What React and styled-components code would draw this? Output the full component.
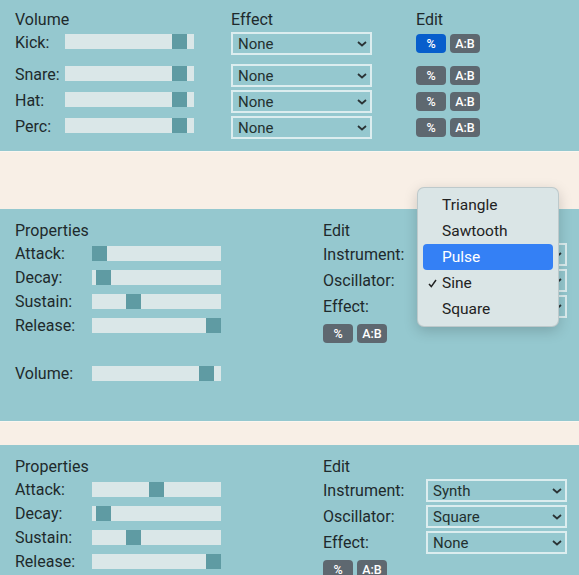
import React from "react";
import styled, { createGlobalStyle } from "styled-components";

const Global = createGlobalStyle`
  html, body { margin: 0; padding: 0; }
  body {
    background: #95c8cf;
    font-family: Roboto, "Liberation Sans", sans-serif;
    font-size: 16px;
    color: #1e2a2c;
    overflow: hidden;
  }
`;

const Page = styled.div`
  position: relative;
  width: 579px;
  height: 575px;
  overflow: hidden;
  display: flex;
  flex-direction: column;
`;

const Band = styled.div`
  background: #f8efe6;
  height: ${(p) => p.$h}px;
  flex: none;
  border-top: 1px solid #fbf6f0;
  box-sizing: border-box;
`;

const MixerPanel = styled.section`
  background: #95c8cf;
  height: 151px;
  flex: none;
  box-sizing: border-box;
  padding: 8px 0 0 15px;
  display: flex;
  flex-direction: column;
`;

const MixerHead = styled.div`
  display: grid;
  grid-template-columns: 216px 185px auto;
  align-items: center;
  height: 22px;
`;

const MixerRow = styled.div`
  display: grid;
  grid-template-columns: 216px 185px auto;
  align-items: center;
  height: 26px;
  margin-bottom: ${(p) => p.$gap || 0}px;
`;

const Channel = styled.div`
  display: flex;
  align-items: center;
  margin-bottom: 5px;
`;

const ChannelLabel = styled.span`
  width: 50px;
  flex: none;
  padding-top: 3px;
`;

const Track = styled.div`
  position: relative;
  width: 129px;
  height: 15px;
  background: #dae7e8;
  flex: none;
`;

const Thumb = styled.div`
  position: absolute;
  top: 0;
  width: 15px;
  height: 15px;
  background: #5f9ba3;
`;

const SelectBox = styled.div`
  box-sizing: border-box;
  width: 141px;
  height: 23px;
  border: 2px solid #dcedef;
  display: flex;
  align-items: center;
  justify-content: space-between;
  padding: 1px 3px 0 5px;
  font-size: 15px;
  color: #23312f;
`;

const ButtonPair = styled.div`
  display: flex;
  gap: 4px;
  margin-top: ${(p) => p.$top || 0}px;
`;

const EditButton = styled.button`
  width: 30px;
  height: 19px;
  border: none;
  border-radius: 4px;
  padding: 0;
  background: ${(p) => (p.$active ? "#075ecc" : "#5e6870")};
  color: #fff;
  font-family: Roboto, "Liberation Sans", sans-serif;
  font-size: 12.5px;
  font-weight: 500;
  display: flex;
  align-items: center;
  justify-content: center;
`;

const VoicePanel = styled.section`
  background: #95c8cf;
  height: ${(p) => p.$h}px;
  flex: none;
  box-sizing: border-box;
  padding: 10px 0 0 15px;
  display: grid;
  grid-template-columns: 308px auto;
  align-items: start;
`;

const Column = styled.div`
  display: flex;
  flex-direction: column;
`;

const Heading = styled.div`
  height: 22px;
  display: flex;
  align-items: center;
`;

const PropRow = styled.div`
  height: 24px;
  display: flex;
  align-items: center;
  margin-top: ${(p) => p.$gap || 0}px;
`;

const PropLabel = styled.span`
  width: 77px;
  flex: none;
`;

const EditRow = styled.div`
  height: 26px;
  display: flex;
  align-items: center;
`;

const EditLabel = styled.span`
  width: 103px;
  flex: none;
`;

const Menu = styled.div`
  position: absolute;
  left: 417px;
  top: 187px;
  width: 142px;
  height: 140px;
  box-sizing: border-box;
  padding: 4px 5px;
  border-radius: 7px;
  background: #dae5e6;
  border: 1px solid rgba(60, 80, 85, 0.18);
  box-shadow: 0 4px 14px rgba(0, 0, 0, 0.18);
  display: flex;
  flex-direction: column;
`;

const MenuItem = styled.div`
  position: relative;
  height: 26px;
  display: flex;
  align-items: center;
  padding-left: 19px;
  border-radius: 4px;
  font-size: 15.5px;
  background: ${(p) => (p.$hl ? "#3480f5" : "transparent")};
  color: ${(p) => (p.$hl ? "#fff" : "#222")};
`;

const Check = styled.svg`
  position: absolute;
  left: 5px;
  top: 9px;
`;

const Chevron = () => (
  <svg width="10" height="6" viewBox="0 0 10 6">
    <path d="M1 1 L5 4.5 L9 1" fill="none" stroke="#2a3335" strokeWidth="1.8" />
  </svg>
);

const Select = ({ value }) => (
  <SelectBox>
    <span>{value}</span>
    <Chevron />
  </SelectBox>
);

const Slider = ({ pos }) => (
  <Track>
    <Thumb style={{ left: pos }} />
  </Track>
);

const Buttons = ({ active, top }) => (
  <ButtonPair $top={top}>
    <EditButton $active={active}>%</EditButton>
    <EditButton>A:B</EditButton>
  </ButtonPair>
);

const channels = [
  { name: "Kick", gap: 6, active: true },
  { name: "Snare" },
  { name: "Hat" },
  { name: "Perc" },
];

const Voice = ({ h, props, volume, selects }) => (
  <VoicePanel $h={h}>
    <Column>
      <Heading>Properties</Heading>
      {props.map(([n, p]) => (
        <PropRow key={n}>
          <PropLabel>{n}:</PropLabel>
          <Slider pos={p} />
        </PropRow>
      ))}
      {volume !== undefined && (
        <PropRow $gap={24}>
          <PropLabel>Volume:</PropLabel>
          <Slider pos={volume} />
        </PropRow>
      )}
    </Column>
    <Column>
      <Heading>Edit</Heading>
      {[
        ["Instrument", selects[0]],
        ["Oscillator", selects[1]],
        ["Effect", selects[2]],
      ].map(([l, v]) => (
        <EditRow key={l}>
          <EditLabel>{l}:</EditLabel>
          <Select value={v} />
        </EditRow>
      ))}
      <Buttons top={5} />
    </Column>
  </VoicePanel>
);

export default function App() {
  return (
    <Page>
      <Global />
      <MixerPanel>
        <MixerHead>
          <span>Volume</span>
          <span>Effect</span>
          <span>Edit</span>
        </MixerHead>
        {channels.map((c) => (
          <MixerRow key={c.name} $gap={c.gap}>
            <Channel>
              <ChannelLabel>{c.name}:</ChannelLabel>
              <Slider pos={107} />
            </Channel>
            <Select value="None" />
            <Buttons active={c.active} />
          </MixerRow>
        ))}
      </MixerPanel>
      <Band $h={58} />
      <Voice
        h={212}
        props={[
          ["Attack", 0],
          ["Decay", 4],
          ["Sustain", 34],
          ["Release", 114],
        ]}
        volume={107}
        selects={["Synth", "Sine", "None"]}
      />
      <Band $h={24} />
      <Voice
        h={200}
        props={[
          ["Attack", 57],
          ["Decay", 4],
          ["Sustain", 34],
          ["Release", 114],
        ]}
        selects={["Synth", "Square", "None"]}
      />
      <Menu>
        <MenuItem>Triangle</MenuItem>
        <MenuItem>Sawtooth</MenuItem>
        <MenuItem $hl>Pulse</MenuItem>
        <MenuItem>
          <Check width="9" height="9" viewBox="0 0 9 9">
            <path d="M1 5 L3.3 7.6 L8 1" fill="none" stroke="#222" strokeWidth="1.5" />
          </Check>
          Sine
        </MenuItem>
        <MenuItem>Square</MenuItem>
      </Menu>
    </Page>
  );
}
